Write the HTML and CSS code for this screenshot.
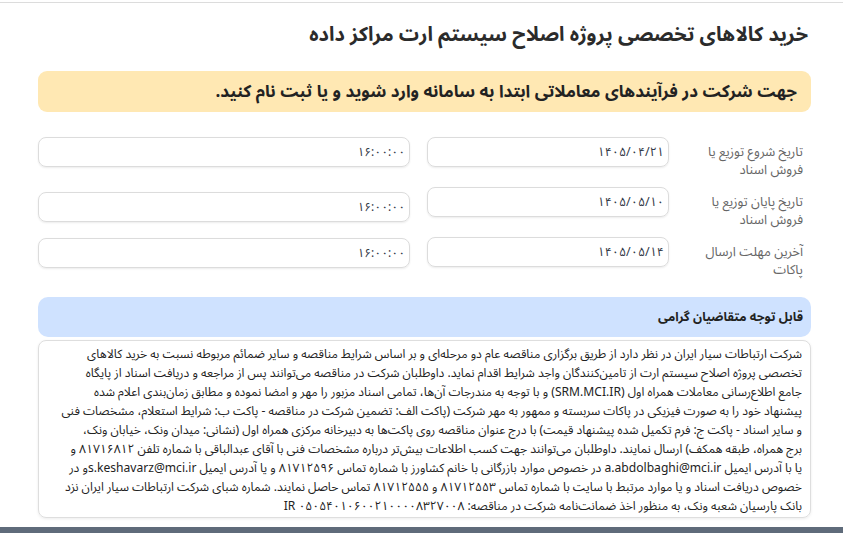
FILE: index.html
```html
<!DOCTYPE html>
<html lang="fa" dir="rtl">
<head>
<meta charset="utf-8">
<title>خرید کالاهای تخصصی پروژه اصلاح سیستم ارت مراکز داده</title>
<link rel="stylesheet" href="styles.css">
</head>
<body>
<div class="page">
  <header class="page-head">
    <h1 class="title">خرید کالاهای تخصصی پروژه اصلاح سیستم ارت مراکز داده</h1>
  </header>

  <div class="notice">جهت شرکت در فرآیندهای معاملاتی ابتدا به سامانه وارد شوید و یا ثبت نام کنید.</div>

  <div class="dates">
    <div class="row">
      <div class="label">تاریخ شروع توزیع یا فروش اسناد</div>
      <div class="field field-date">۱۴۰۵/۰۴/۲۱</div>
      <div class="field field-time">۱۶:۰۰:۰۰</div>
    </div>
    <div class="row">
      <div class="label">تاریخ پایان توزیع یا فروش اسناد</div>
      <div class="field field-date">۱۴۰۵/۰۵/۱۰</div>
      <div class="field field-time field-shift">۱۶:۰۰:۰۰</div>
    </div>
    <div class="row">
      <div class="label">آخرین مهلت ارسال پاکات</div>
      <div class="field field-date">۱۴۰۵/۰۵/۱۴</div>
      <div class="field field-time field-shift-sm">۱۶:۰۰:۰۰</div>
    </div>
  </div>

  <div class="card-head">قابل توجه متقاضیان گرامی</div>
  <div class="card-body">
    <span class="ln">شرکت ارتباطات سیار ایران در نظر دارد از طریق برگزاری مناقصه عام دو مرحله‌ای و بر اساس شرایط مناقصه و سایر ضمائم مربوطه نسبت به خرید کالاهای</span>
    <span class="ln">تخصصی پروژه اصلاح سیستم ارت از تامین‌کنندگان واجد شرایط اقدام نماید. داوطلبان شرکت در مناقصه می‌توانند پس از مراجعه و دریافت اسناد از پایگاه</span>
    <span class="ln">جامع اطلاع‌رسانی معاملات همراه اول (SRM.MCI.IR) و با توجه به مندرجات آن‌ها، تمامی اسناد مزبور را مهر و امضا نموده و مطابق زمان‌بندی اعلام شده</span>
    <span class="ln">پیشنهاد خود را به صورت فیزیکی در پاکات سربسته و ممهور به مهر شرکت (پاکت الف: تضمین شرکت در مناقصه - پاکت ب: شرایط استعلام، مشخصات فنی</span>
    <span class="ln">و سایر اسناد - پاکت ج: فرم تکمیل شده پیشنهاد قیمت) با درج عنوان مناقصه روی پاکت‌ها به دبیرخانه مرکزی همراه اول (نشانی: میدان ونک، خیابان ونک،</span>
    <span class="ln">برج همراه، طبقه همکف) ارسال نمایند. داوطلبان می‌توانند جهت کسب اطلاعات بیش‌تر درباره مشخصات فنی با آقای عبدالباقی با شماره تلفن ۸۱۷۱۶۸۱۲ و</span>
    <span class="ln">یا با آدرس ایمیل a.abdolbaghi@mci.ir در خصوص موارد بازرگانی با خانم کشاورز با شماره تماس ۸۱۷۱۲۵۹۶ و یا آدرس ایمیل s.keshavarz@mci.irو در</span>
    <span class="ln">خصوص دریافت اسناد و یا موارد مرتبط با سایت با شماره تماس ۸۱۷۱۲۵۵۳ و ۸۱۷۱۲۵۵۵ تماس حاصل نمایند. شماره شبای شرکت ارتباطات سیار ایران نزد</span>
    <span class="ln">بانک پارسیان شعبه ونک، به منظور اخذ ضمانت‌نامه شرکت در مناقصه: ۰۵۰۵۴۰۱۰۶۰۰۲۱۰۰۰۰۸۳۲۷۰۰۸ IR</span>
  </div>
</div>
<div class="footer-bar"></div>
</body>
</html>
```

FILE: styles.css
```css
* { box-sizing: border-box; }

html, body {
  margin: 0;
  padding: 0;
  background: #ffffff;
}

body {
  font-family: "Noto Sans Arabic", "Vazirmatn", "DejaVu Sans", sans-serif;
  color: #333333;
  height: 533px;
  overflow: hidden;
  display: flex;
  flex-direction: column;
}

.page {
  flex: 1;
  border-top: 1px solid #dcdcdc;
  margin-top: 2px;
  padding: 0 32px 0 38px;
}

.page-head {
  padding: 16px 3px 0 0;
  height: 68px;
}

.title {
  margin: 0;
  font-size: 20px;
  font-weight: bold;
  line-height: 32px;
  color: #2b2b2b;
  white-space: nowrap;
}

.notice {
  background: #ffe8b3;
  border-radius: 9px;
  height: 41px;
  padding: 0 14px;
  display: flex;
  align-items: center;
  font-size: 17px;
  font-weight: bold;
  color: #222;
  white-space: nowrap;
}

.dates {
  margin-top: 25px;
  display: flex;
  flex-direction: column;
  gap: 12px;
}

.row {
  display: flex;
  align-items: flex-start;
  height: 38px;
}

.label {
  width: 142px;
  padding: 6px 8px 0 17px;
  font-size: 13px;
  line-height: 18px;
  color: #666666;
  flex: none;
}

.field {
  height: 30px;
  border: 1px solid #dcdcdc;
  border-radius: 8px;
  box-shadow: 0 1px 2px rgba(0, 0, 0, 0.08);
  display: flex;
  align-items: center;
  padding: 0 4px;
  font-size: 12px;
  color: #333a48;
  flex: none;
}

.field-date {
  width: 242px;
  margin-left: 17px;
  font-size: 12.5px;
}

.field-time {
  width: 372px;
}

.field-shift { margin-top: 5px; }
.field-shift-sm { margin-top: 1px; }

.card-head {
  margin-top: 22px;
  background: #cfe2ff;
  border-radius: 10px;
  height: 40px;
  padding: 0 8px;
  display: flex;
  align-items: center;
  font-size: 12.5px;
  font-weight: bold;
  color: #222;
}

.card-body {
  margin-top: 3px;
  border: 1px solid #dedede;
  border-radius: 8px;
  box-shadow: 0 1px 3px rgba(0, 0, 0, 0.08);
  padding: 4px 8px 1px 8px;
  font-size: 12.1px;
  line-height: 19px;
  color: #222;
}

.ln {
  display: block;
  white-space: nowrap;
}

.footer-bar {
  height: 6px;
  background: #5f6b7a;
  flex: none;
}
```
